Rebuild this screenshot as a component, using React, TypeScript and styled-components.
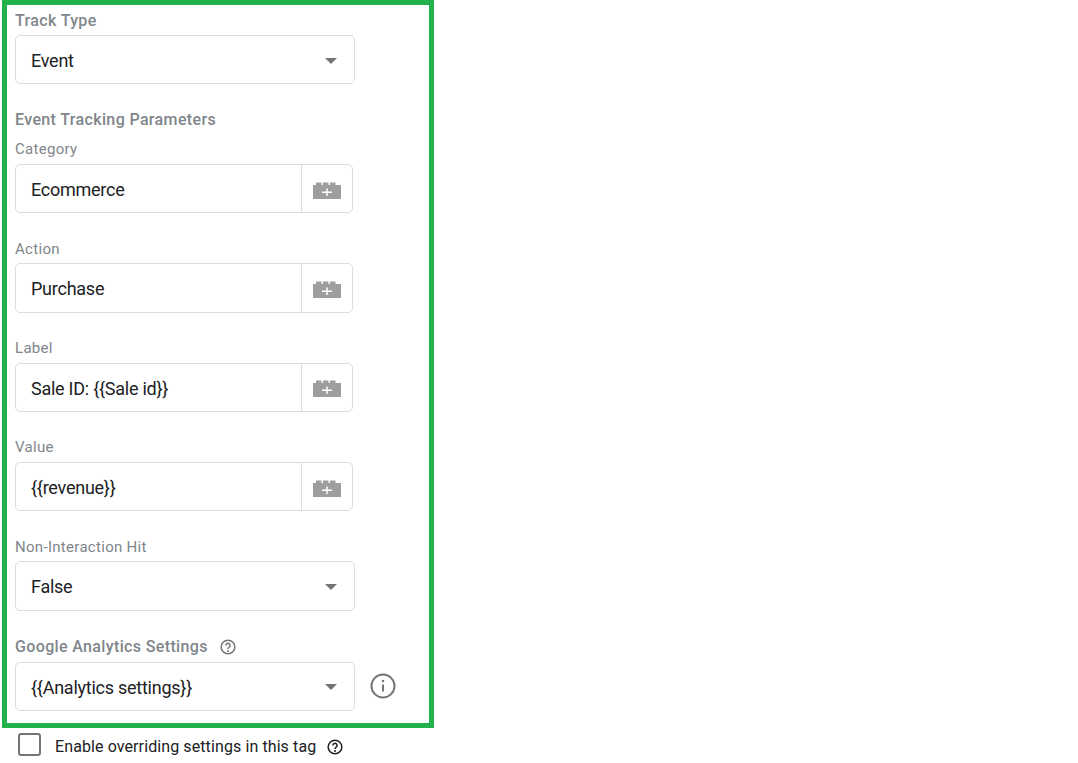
import React from 'react';
import styled, { createGlobalStyle } from 'styled-components';

const GlobalStyle = createGlobalStyle`
  html, body {
    margin: 0;
    padding: 0;
    background: #fff;
    font-family: Roboto, "Liberation Sans", sans-serif;
  }
`;

const Page = styled.div`
  width: 1078px;
  height: 763px;
  padding-left: 2px;
  box-sizing: border-box;
  overflow: hidden;
`;

const Frame = styled.section`
  width: 432px;
  height: 728px;
  box-sizing: border-box;
  border: 5px solid #22b14c;
  padding: 4.33px 0 0 8px;
`;

const Field = styled.div<{ $top?: number }>`
  margin-top: ${props => props.$top ?? 24.33}px;
`;

const FieldLabel = styled.div<{ $strong?: boolean }>`
  display: flex;
  align-items: center;
  height: 20px;
  box-sizing: border-box;
  padding-top: 2px;
  margin-bottom: 5.67px;
  color: #80868b;
  font-size: ${props => (props.$strong ? 16 : 15)}px;
  letter-spacing: ${props => (props.$strong ? 0.36 : 0.3)}px;
  font-weight: ${props => (props.$strong ? 500 : 400)};
  white-space: nowrap;
`;

const SectionTitle = styled(FieldLabel)`
  margin: 24.67px 0 0;
  font-size: 16px;
  letter-spacing: 0.36px;
  font-weight: 500;
`;

const ControlRow = styled.div`
  display: flex;
  align-items: center;
`;

const Select = styled.div`
  display: flex;
  align-items: center;
  justify-content: space-between;
  width: 340px;
  height: 49.33px;
  box-sizing: border-box;
  padding: 0 17px 0 15px;
  border: 1px solid #dadce0;
  border-radius: 5px;
`;

const ValueText = styled.span`
  padding-top: 2px;
  color: #202124;
  font-size: 18px;
  letter-spacing: -0.25px;
  white-space: nowrap;
`;

const Caret = styled.span`
  width: 0;
  height: 0;
  margin-top: 2px;
  border-left: 6px solid transparent;
  border-right: 6px solid transparent;
  border-top: 6px solid #757575;
`;

const InputBox = styled.div`
  display: flex;
  width: 338px;
  height: 49.33px;
  box-sizing: border-box;
  border: 1px solid #dadce0;
  border-radius: 5px;
`;

const InputArea = styled.div`
  flex: 1;
  display: flex;
  align-items: center;
  padding-left: 15px;
`;

const VariableButton = styled.div`
  display: flex;
  align-items: center;
  justify-content: center;
  width: 51px;
  box-sizing: border-box;
  padding-top: 3px;
  border-left: 1px solid #dadce0;
`;

const InfoSlot = styled.div`
  display: flex;
  margin-left: 15px;
`;

const HelpSlot = styled.span<{ $gap: number; $drop?: number }>`
  display: flex;
  margin-left: ${props => props.$gap}px;
  padding-top: ${props => props.$drop ?? 0}px;
`;

const OverrideRow = styled.div`
  display: flex;
  align-items: center;
  height: 24px;
  margin: 4px 0 0 16px;
`;

const Checkbox = styled.span`
  width: 23px;
  height: 23px;
  box-sizing: border-box;
  border: 2px solid #757575;
  border-radius: 3px;
`;

const OverrideText = styled.span`
  margin-left: 14px;
  padding-top: 4px;
  color: #202124;
  font-size: 16px;
  letter-spacing: 0.1px;
  white-space: nowrap;
`;

const BrickIcon = () => (
  <svg width="28" height="17" viewBox="0 0 28 17">
    <path
      fill="#9e9e9e"
      d="M0 3h3V.5h5.500V3h1.500V.5h5.500V3h1.500V.5h5.500V3H28v14H0z"
    />
    <path fill="none" stroke="#fff" strokeWidth="1.500" d="M14 6.500V14M9 10.300h10" />
  </svg>
);

const HelpIcon = ({ color }: { color: string }) => (
  <svg width="16" height="16" viewBox="0 0 18 18" fill="none">
    <circle cx="9" cy="9" r="7.700" stroke={color} strokeWidth="1.700" />
    <path d="M6.700 7.200a2.300 2.300 0 1 1 3.700 1.800c-.9.700-1.400 1.100-1.400 2.200" stroke={color} strokeWidth="1.700" />
    <circle cx="9" cy="13.400" r="1.100" fill={color} />
  </svg>
);

const InfoIcon = () => (
  <svg width="26" height="26" viewBox="0 0 26 26" fill="none">
    <circle cx="13" cy="13" r="11.500" stroke="#757575" strokeWidth="2" />
    <path d="M13 11.500v7" stroke="#757575" strokeWidth="2" />
    <circle cx="13" cy="8" r="1.300" fill="#757575" />
  </svg>
);

const TextField = ({ label, value, top }: { label: string; value: string; top?: number }) => (
  <Field $top={top}>
    <FieldLabel>{label}</FieldLabel>
    <InputBox>
      <InputArea>
        <ValueText>{value}</ValueText>
      </InputArea>
      <VariableButton>
        <BrickIcon />
      </VariableButton>
    </InputBox>
  </Field>
);

const SelectBox = ({ value }: { value: string }) => (
  <Select>
    <ValueText>{value}</ValueText>
    <Caret />
  </Select>
);

export default function App() {
  return (
    <Page>
      <GlobalStyle />
      <Frame>
        <Field $top={0}>
          <FieldLabel $strong>Track Type</FieldLabel>
          <SelectBox value="Event" />
        </Field>
        <SectionTitle>Event Tracking Parameters</SectionTitle>
        <TextField label="Category" value="Ecommerce" top={9.33} />
        <TextField label="Action" value="Purchase" />
        <TextField label="Label" value="Sale ID: {{Sale id}}" />
        <TextField label="Value" value="{{revenue}}" />
        <Field>
          <FieldLabel>Non-Interaction Hit</FieldLabel>
          <SelectBox value="False" />
        </Field>
        <Field $top={25.33}>
          <FieldLabel $strong>
            Google Analytics Settings
            <HelpSlot $gap={12}>
              <HelpIcon color="#757575" />
            </HelpSlot>
          </FieldLabel>
          <ControlRow>
            <SelectBox value="{{Analytics settings}}" />
            <InfoSlot>
              <InfoIcon />
            </InfoSlot>
          </ControlRow>
        </Field>
      </Frame>
      <OverrideRow>
        <Checkbox />
        <OverrideText>Enable overriding settings in this tag</OverrideText>
        <HelpSlot $gap={11} $drop={5}>
          <HelpIcon color="#202124" />
        </HelpSlot>
      </OverrideRow>
    </Page>
  );
}
